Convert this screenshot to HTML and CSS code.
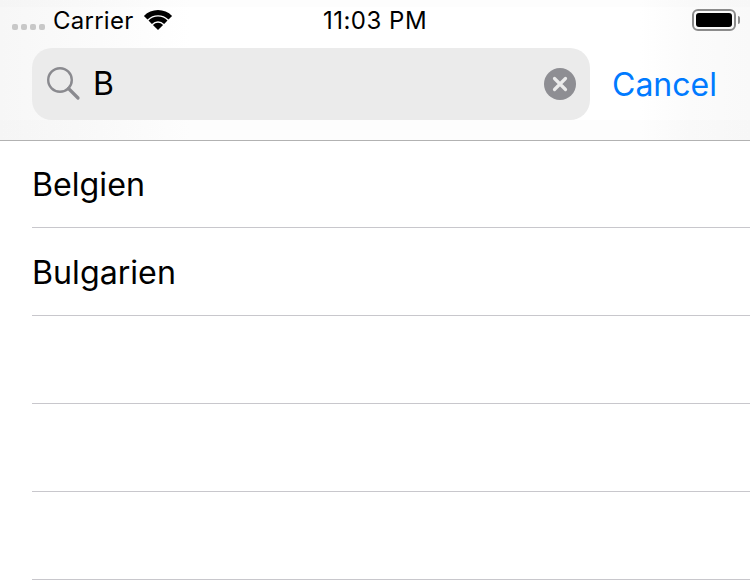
FILE: index.html
```html
<!DOCTYPE html>
<html lang="en">
<head>
	<meta charset="UTF-8">
	<meta name="viewport" content="width=device-width, initial-scale=1.0">
	<title>Search</title>
	<link rel="stylesheet" href="styles.css">
</head>
<body>
	<header class="top">
		<div class="statusbar">
			<div class="status-left">
				<div class="signal"><i></i><i></i><i></i><i></i></div>
				<span class="carrier">Carrier</span>
				<svg class="wifi" width="30" height="22" viewBox="0 0 30 22">
					<path d="M15 21 L9.9 15.9 A7.2 7.2 0 0 1 20.1 15.9 Z" fill="#000"/>
					<path d="M8.9 14.9 L5.5 11.5 A13.4 13.4 0 0 1 24.5 11.5 L21.1 14.9 A8.6 8.6 0 0 0 8.9 14.9 Z" fill="#000"/>
					<path d="M4.5 10.5 L0.9 6.9 A20 20 0 0 1 29.1 6.9 L25.5 10.5 A14.8 14.8 0 0 0 4.5 10.5 Z" fill="#000"/>
				</svg>
			</div>
			<span class="time">11:03 PM</span>
			<div class="battery"><div class="battery-body"><div class="battery-fill"></div></div><div class="battery-tip"></div></div>
		</div>
		<div class="searchrow">
			<div class="searchbox">
				<svg class="glass" width="34" height="34" viewBox="0 0 34 34">
					<circle cx="13" cy="13" r="11.8" fill="none" stroke="#8a8a8f" stroke-width="2.4"/>
					<path d="M21.5 21.5 L31 31" stroke="#8a8a8f" stroke-width="3.2" stroke-linecap="round"/>
				</svg>
				<span class="query">B</span>
				<svg class="clear" width="32" height="32" viewBox="0 0 32 32">
					<circle cx="16" cy="16" r="16" fill="#8e8e93"/>
					<path d="M10.5 10.5 L21.5 21.5 M21.5 10.5 L10.5 21.5" stroke="#ebebeb" stroke-width="3.2" stroke-linecap="round"/>
				</svg>
			</div>
			<span class="cancel">Cancel</span>
		</div>
	</header>
	<ul class="list">
		<li>Belgien</li>
		<li>Bulgarien</li>
		<li></li>
		<li></li>
		<li></li>
	</ul>
</body>
</html>
```

FILE: styles.css
```css
* {
	box-sizing: border-box;
}
body {
	margin: 0;
	height: 586px;
	overflow: hidden;
	background: #fff;
	font-family: Inter, "Liberation Sans", sans-serif;
	color: #000;
}
.top {
	height: 141px;
	border-bottom: 1px solid #b2b2b2;
	background:
		linear-gradient(180deg, rgba(0,0,0,.008) 0, rgba(0,0,0,.008) 7px, transparent 7px, transparent 120px, rgba(0,0,0,.006) 120px),
		linear-gradient(90deg, #f7f7f7 0, #fbfbfb 100px, #fff 190px, #fff 640px, #fbfbfb 690px, #f9f9f9 100%);
}
.statusbar {
	height: 40px;
	padding: 0 10px 0 12px;
	display: grid;
	grid-template-columns: 1fr auto 1fr;
	align-items: center;
}
.status-left {
	display: flex;
	align-items: center;
}
.signal {
	display: flex;
	gap: 3px;
	margin-top: 14px;
}
.signal i {
	width: 6px;
	height: 6px;
	border-radius: 2px;
	background: #c8c8c8;
}
.carrier {
	margin-left: 8px;
	font-size: 24px;
	letter-spacing: 0.25px;
}
.wifi {
	margin-left: 10px;
	margin-top: -1px;
}
.time {
	margin-left: -2px;
	font-size: 24px;
	letter-spacing: 0.5px;
}
.battery {
	justify-self: end;
	display: flex;
	align-items: center;
	gap: 2px;
	margin-top: -1px;
}
.battery-body {
	width: 44px;
	height: 22px;
	padding: 2px;
	border: 2px solid #8b8b8b;
	border-radius: 6px;
}
.battery-fill {
	height: 100%;
	background: #000;
	border-radius: 3px;
}
.battery-tip {
	width: 2px;
	height: 8px;
	background: #8b8b8b;
	border-radius: 0 2px 2px 0;
}
.searchrow {
	display: flex;
	align-items: center;
	padding: 8px 0 0 32px;
}
.searchbox {
	width: 558px;
	height: 72px;
	padding: 0 14px 0 15px;
	display: flex;
	align-items: center;
	background: #ebebeb;
	border-radius: 20px;
}
.glass {
	flex: none;
}
.query {
	flex: 1;
	margin-left: 12px;
	margin-top: -2px;
	font-size: 32px;
}
.cancel {
	margin-left: 22px;
	font-size: 32px;
	color: #007aff;
}
.list {
	margin: 0;
	padding: 0 0 0 32px;
	list-style: none;
}
.list li {
	height: 88px;
	padding: 2px 0 0 0;
	display: flex;
	align-items: center;
	border-bottom: 1px solid #c8c7cc;
	font-size: 32.2px;
}
.list li:first-child {
	height: 87px;
	padding-top: 1px;
}
```
